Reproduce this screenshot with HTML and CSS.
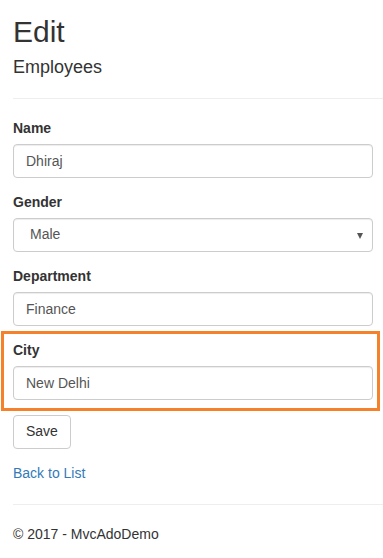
FILE: index.html
```html
<!DOCTYPE html>
<html lang="en">
<head>
  <meta charset="UTF-8" />
  <meta name="viewport" content="width=device-width, initial-scale=1.0"/>
  <title>Edit - MvcAdoDemo</title>
  <link rel="stylesheet" href="styles.css">
</head>
<body>

<div class="body-content">
  <h2>Edit</h2>

  <form class="form-horizontal">
    <h4>Employees</h4>
    <hr />

    <div class="form-group">
      <label for="name">Name</label>
      <input type="text" id="name" class="form-control" value="Dhiraj" />
    </div>

    <div class="form-group">
      <label for="gender">Gender</label>
      <div class="select-wrap">
        <select id="gender" class="form-control">
          <option selected>Male</option>
          <option>Female</option>
        </select>
      </div>
    </div>

    <div class="form-group">
      <label for="dept">Department</label>
      <input type="text" id="dept" class="form-control" value="Finance" />
    </div>

    <div class="form-group highlight">
      <label for="city">City</label>
      <input type="text" id="city" class="form-control" value="New Delhi" />
    </div>

    <div class="form-group">
      <button type="submit" class="btn">Save</button>
    </div>
  </form>

  <div>
    <a href="#">Back to List</a>
  </div>

  <hr />
  <footer>
    <p>&copy; 2017 - MvcAdoDemo</p>
  </footer>
</div>

</body>
</html>
```

FILE: styles.css
```css
body {
  margin: 0;
  font-family: "Liberation Sans", Arial, sans-serif;
  font-size: 14px;
  line-height: 1.42857;
  color: #333;
  background: #fff;
}
.body-content {
  padding-left: 13px;
}
h2 {
  font-size: 30px;
  font-weight: 500;
  line-height: 1.1;
  margin: 15px 0 10px;
}
h4 {
  font-size: 18px;
  font-weight: 500;
  line-height: 1.1;
  margin: 10px 0 10px;
}
hr {
  border: 0;
  border-top: 1px solid #eee;
  margin: 20px 0;
}
form {
  margin: 0;
}
.form-group {
  margin-bottom: 15px;
}
.form-group label {
  display: block;
  font-weight: bold;
  margin-bottom: 5px;
}
.form-control {
  display: block;
  box-sizing: border-box;
  width: 360px;
  height: 34px;
  padding: 6px 12px;
  font-family: inherit;
  font-size: 14px;
  line-height: 1.42857;
  color: #555;
  background: #fff;
  border: 1px solid #ccc;
  border-radius: 4px;
  box-shadow: inset 0 1px 1px rgba(0, 0, 0, 0.075);
}
.select-wrap {
  position: relative;
  width: 360px;
}
.select-wrap select {
  appearance: none;
  -webkit-appearance: none;
  padding-left: 16px;
}
.select-wrap::after {
  content: "";
  position: absolute;
  right: 10px;
  top: 15px;
  border-left: 3.5px solid transparent;
  border-right: 3.5px solid transparent;
  border-top: 6px solid #555;
  pointer-events: none;
}
.highlight {
  position: relative;
}
.highlight::before {
  content: "";
  position: absolute;
  left: -12px;
  top: -10px;
  width: 379px;
  height: 80px;
  box-sizing: border-box;
  border: 3px solid #f5822a;
  pointer-events: none;
}
.btn {
  display: inline-block;
  padding: 6px 12px;
  font-family: inherit;
  font-size: 14px;
  line-height: 1.42857;
  color: #333;
  background: #fff;
  border: 1px solid #ccc;
  border-radius: 4px;
  cursor: pointer;
}
a {
  color: #337ab7;
  text-decoration: none;
}
footer p {
  margin: 0 0 10px;
}
```
